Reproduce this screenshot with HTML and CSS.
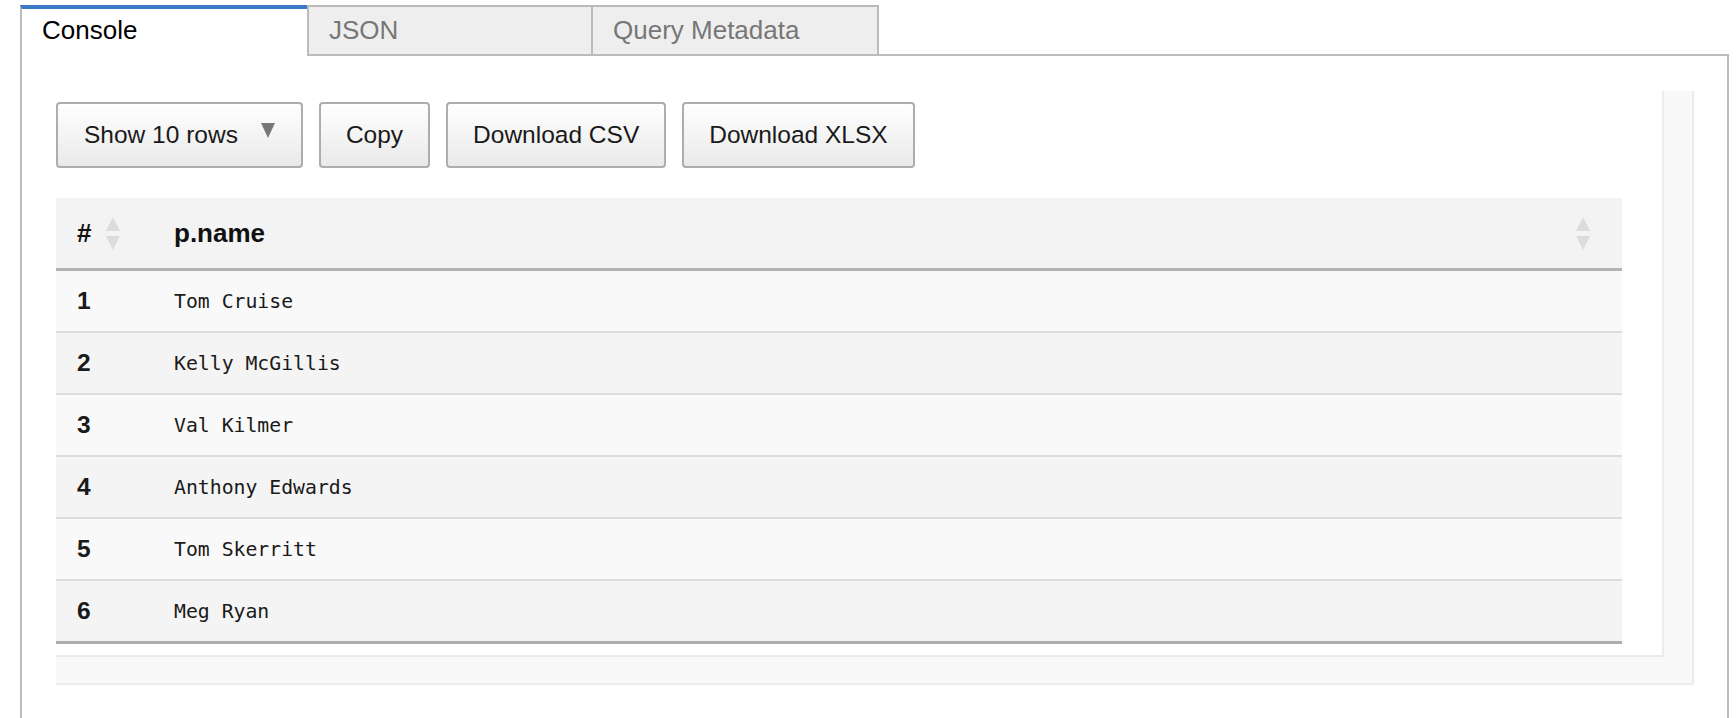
FILE: index.html
```html
<!DOCTYPE html>
<html>
<head>
<meta charset="utf-8">
<link rel="stylesheet" href="styles.css">
</head>
<body>
<div class="frame">
  <div class="tabs">
    <div class="tab active">Console</div>
    <div class="tab first-inactive">JSON</div>
    <div class="tab">Query Metadata</div>
    <div class="tab-fill"></div>
  </div>
  <div class="panel">
    <div class="scroll">
      <div class="inner">
        <div class="buttons">
          <div class="btn btn-select">Show 10 rows<svg class="caret" width="14" height="15" viewBox="0 0 14 15"><polygon points="0,0 14,0 7,15" fill="#777"/></svg></div>
          <div class="btn">Copy</div>
          <div class="btn">Download CSV</div>
          <div class="btn">Download XLSX</div>
        </div>
        <table class="grid">
          <thead>
            <tr>
              <th class="col-num"><div class="th-in"><span>#</span><span class="sort"><svg width="14" height="33" viewBox="0 0 14 33"><polygon points="7,0 14,14 0,14" fill="#dcdcdc"/><polygon points="0,19 14,19 7,33" fill="#dcdcdc"/></svg></span></div></th>
              <th class="col-name"><div class="th-in"><span>p.name</span><span class="sort"><svg width="14" height="33" viewBox="0 0 14 33"><polygon points="7,0 14,14 0,14" fill="#dcdcdc"/><polygon points="0,19 14,19 7,33" fill="#dcdcdc"/></svg></span></div></th>
            </tr>
          </thead>
          <tbody>
            <tr><td class="num">1</td><td class="name">Tom Cruise</td></tr>
            <tr><td class="num">2</td><td class="name">Kelly McGillis</td></tr>
            <tr><td class="num">3</td><td class="name">Val Kilmer</td></tr>
            <tr><td class="num">4</td><td class="name">Anthony Edwards</td></tr>
            <tr><td class="num">5</td><td class="name">Tom Skerritt</td></tr>
            <tr><td class="num">6</td><td class="name">Meg Ryan</td></tr>
          </tbody>
        </table>
      </div>
    </div>
  </div>
</div>
</body>
</html>
```

FILE: styles.css
```css
html, body {
  margin: 0;
  padding: 0;
  background: #fff;
  overflow: hidden;
}
body {
  font-family: "Liberation Sans", Arial, Helvetica, sans-serif;
  color: #222;
}
.frame {
  margin-left: 20px;
  width: 1709px;
}
.tabs {
  display: flex;
  padding-top: 5px;
}
.tab {
  box-sizing: border-box;
  width: 286px;
  height: 51px;
  padding: 8px 0 0 20px;
  font-size: 26px;
  line-height: 30px;
  color: #777;
  background: #eee;
  border-top: 2px solid #bbb;
  border-right: 2px solid #bbb;
  border-bottom: 2px solid #bbb;
}
.tab.first-inactive {
  border-left: 2px solid #bbb;
}
.tab.active {
  width: 287px;
  padding-top: 6px;
  color: #000;
  background: #fff;
  border-top: 4px solid #3b78c8;
  border-left: 2px solid #bbb;
  border-right: none;
  border-bottom: none;
}
.tab-fill {
  flex: 1;
  border-bottom: 2px solid #bbb;
}
.panel {
  box-sizing: border-box;
  height: 700px;
  border-left: 2px solid #bbb;
  border-right: 2px solid #bbb;
  padding: 35px 35px 0 34px;
}
.scroll {
  box-sizing: border-box;
  width: 1638px;
  background: #f9f9f9;
  border-right: 2px solid #ececec;
  border-bottom: 2px solid #ececec;
  padding: 0 28px 26px 0;
}
.inner {
  background: #fff;
  border-right: 2px solid #ececec;
  border-bottom: 2px solid #ececec;
  padding: 11px 0 11px 0;
}
.buttons {
  display: flex;
  gap: 16px;
}
.btn {
  box-sizing: border-box;
  height: 66px;
  display: flex;
  align-items: center;
  white-space: nowrap;
  flex: none;
  padding: 0 25px;
  font-size: 24.5px;
  color: #1a1a1a;
  border: 2px solid #adadad;
  border-radius: 4px;
  background: linear-gradient(to bottom, #ffffff 0%, #e9e9e9 100%);
}
.btn-select {
  padding-left: 26px;
  padding-right: 26px;
}
.caret {
  flex: none;
  margin-left: 23px;
  margin-top: -9px;
}
.grid {
  margin-top: 30px;
  width: 1566px;
  border-collapse: collapse;
  border-spacing: 0;
}
.grid th {
  height: 70px;
  padding: 0 32px 0 21px;
  background: #f3f3f3;
  border-bottom: 3px solid #b3b3b3;
  text-align: left;
  font-size: 26px;
  font-weight: bold;
  color: #111;
}
.grid th.col-name {
  padding-left: 22px;
}
.col-num {
  width: 96px;
  box-sizing: border-box;
}
.th-in {
  display: flex;
  justify-content: space-between;
  align-items: center;
}
.sort {
  display: flex;
}
.grid td {
  height: 60px;
  padding: 0 0 0 21px;
  border-bottom: 2px solid #dcdcdc;
}
.grid td.name {
  padding-left: 22px;
}
.grid tbody tr:nth-child(odd) td {
  background: #f9f9f9;
}
.grid tbody tr:nth-child(even) td {
  background: #f4f4f4;
}
.grid tbody tr:last-child td {
  border-bottom: 3px solid #adadad;
}
.num {
  font-size: 24.5px;
  font-weight: bold;
  color: #1a1a1a;
}
.name {
  font-family: "DejaVu Sans Mono", "Liberation Mono", monospace;
  font-size: 19.8px;
  color: #1a1a1a;
}
```
